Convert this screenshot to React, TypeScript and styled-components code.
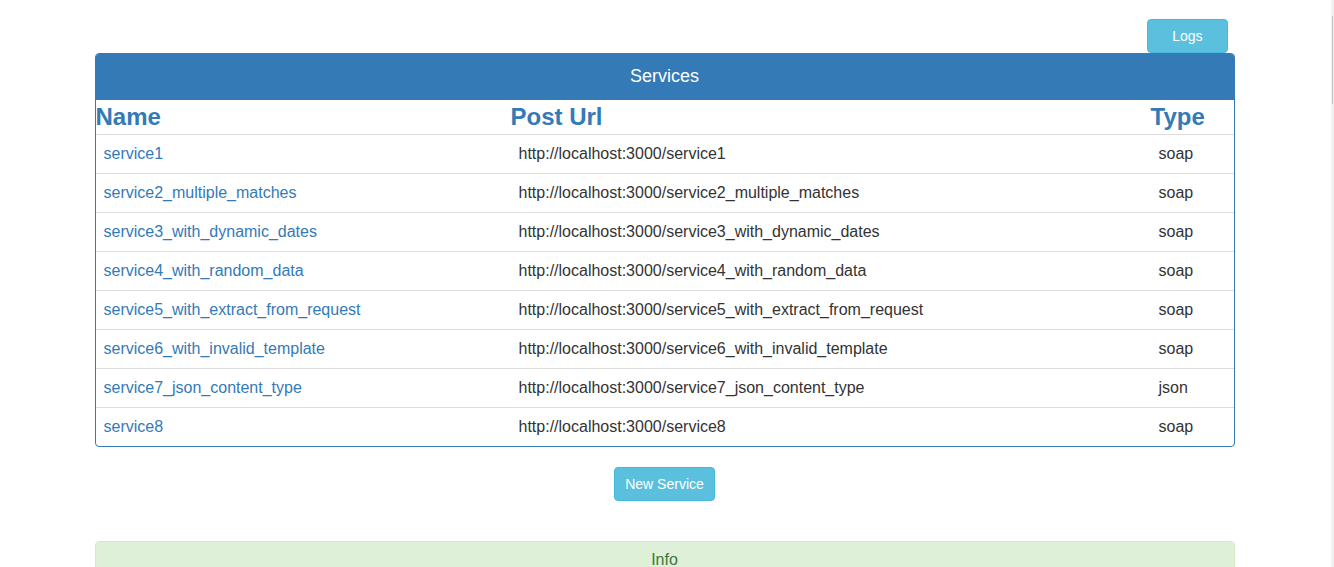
import React from "react";
import styled, { createGlobalStyle } from "styled-components";

const GlobalStyle = createGlobalStyle`
  html, body {
    margin: 0;
    padding: 0;
    background: #fff;
    overflow: hidden;
  }
  body {
    font-family: "Liberation Sans", Arial, Helvetica, sans-serif;
    font-size: 16px;
    color: #333;
  }
  * { box-sizing: border-box; }
`;

const Shell = styled.div`
  display: flex;
  height: 567px;
  width: 100%;
`;

const Main = styled.div`
  flex: 1;
  min-width: 0;
`;

const ScrollTrack = styled.div`
  width: 3px;
  background: #f1f1f1;
  padding-top: 16px;
  display: flex;
  justify-content: flex-end;
`;

const ScrollThumb = styled.div`
  width: 1px;
  height: 88px;
  margin-right: 1px;
  background: #c1c1c1;
`;

const Container = styled.div`
  width: 1170px;
  margin: 0 auto;
  padding: 19px 16px 0 14px;
  display: flex;
  flex-direction: column;
`;

const TopBar = styled.div`
  display: flex;
  justify-content: flex-end;
  padding-right: 7px;
`;

const Button = styled.button<{ $wide?: boolean }>`
  font-family: "Liberation Sans", Arial, sans-serif;
  font-size: 14px;
  line-height: 20px;
  height: 34px;
  padding: 6px ${(p) => (p.$wide ? "24px" : "10px")};
  color: #fff;
  background: #5bc0de;
  border: 1px solid #46b8da;
  border-radius: 4px;
  cursor: pointer;
`;

const Panel = styled.div<{ $variant: "primary" | "success" }>`
  border: 1px solid ${(p) => (p.$variant === "primary" ? "#337ab7" : "#d6e9c6")};
  border-radius: 4px;
  overflow: hidden;
  background: #fff;
`;

const PanelHeading = styled.div<{ $variant: "primary" | "success" }>`
  text-align: center;
  ${(p) =>
    p.$variant === "primary"
      ? `background: #337ab7; color: #fff; font-size: 18px; line-height: 26px; padding: 9px 15px 11px;`
      : `background: #dff0d8; color: #3c763d; font-size: 16px; line-height: 20px; padding: 8px 15px;`}
`;

const Table = styled.table`
  width: 100%;
  border-collapse: collapse;
  table-layout: fixed;
`;

const Th = styled.th`
  text-align: left;
  padding: 0;
  font-size: 24px;
  font-weight: bold;
  line-height: 34px;
  height: 34px;
  color: #337ab7;
`;

const Td = styled.td`
  padding: 8px;
  line-height: 22px;
  font-size: 16px;
  border-top: 1px solid #ddd;
  color: #333;
  white-space: nowrap;
`;

const NameLink = styled.a`
  color: #337ab7;
  text-decoration: none;
`;

const Center = styled.div`
  display: flex;
  justify-content: center;
  padding: 20px 0 40px;
`;

const services = [
  { name: "service1", type: "soap" },
  { name: "service2_multiple_matches", type: "soap" },
  { name: "service3_with_dynamic_dates", type: "soap" },
  { name: "service4_with_random_data", type: "soap" },
  { name: "service5_with_extract_from_request", type: "soap" },
  { name: "service6_with_invalid_template", type: "soap" },
  { name: "service7_json_content_type", type: "json" },
  { name: "service8", type: "soap" },
];

export default function App() {
  return (
    <>
      <GlobalStyle />
      <Shell>
        <Main>
          <Container>
            <TopBar>
              <Button $wide>Logs</Button>
            </TopBar>
            <Panel $variant="primary">
              <PanelHeading $variant="primary">Services</PanelHeading>
              <Table>
                <colgroup>
                  <col style={{ width: 415 }} />
                  <col style={{ width: 640 }} />
                  <col />
                </colgroup>
                <thead>
                  <tr>
                    <Th>Name</Th>
                    <Th>Post Url</Th>
                    <Th>Type</Th>
                  </tr>
                </thead>
                <tbody>
                  {services.map((s) => (
                    <tr key={s.name}>
                      <Td>
                        <NameLink href="#">{s.name}</NameLink>
                      </Td>
                      <Td>http://localhost:3000/{s.name}</Td>
                      <Td>{s.type}</Td>
                    </tr>
                  ))}
                </tbody>
              </Table>
            </Panel>
            <Center>
              <Button>New Service</Button>
            </Center>
            <Panel $variant="success">
              <PanelHeading $variant="success">Info</PanelHeading>
            </Panel>
          </Container>
        </Main>
        <ScrollTrack>
          <ScrollThumb />
        </ScrollTrack>
      </Shell>
    </>
  );
}
